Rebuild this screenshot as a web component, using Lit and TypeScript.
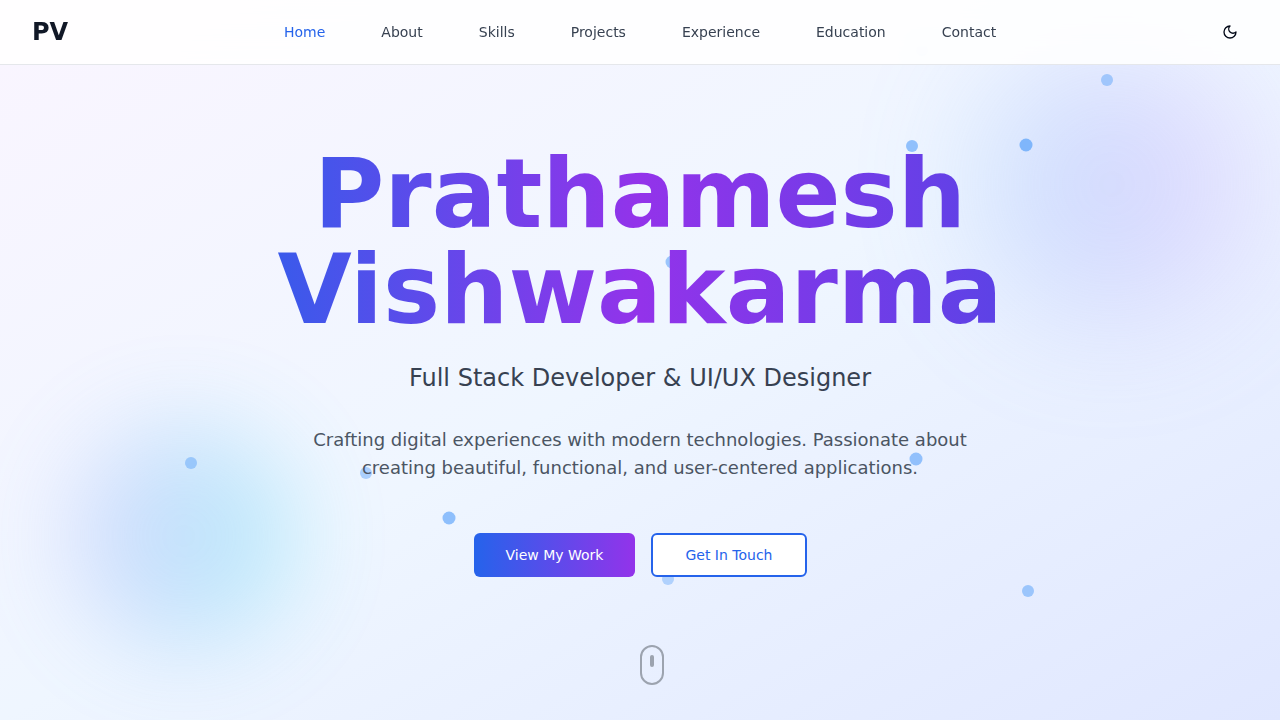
import { LitElement, css, html } from "lit";
import { customElement, state } from "lit/decorators.js";
import { classMap } from "lit/directives/class-map.js";
import { styleMap } from "lit/directives/style-map.js";

interface Particle {
  x: number;
  y: number;
  opacity: number;
  large?: boolean;
}

// Centres of the floating particles, in percent of the hero.
const PARTICLES: Particle[] = [
  { x: 86.48, y: 11.11, opacity: 0.5 },
  { x: 71.25, y: 20.28, opacity: 0.66 },
  { x: 80.16, y: 20.14, opacity: 0.75, large: true },
  { x: 52.5, y: 36.39, opacity: 0.6, large: true },
  { x: 14.92, y: 64.31, opacity: 0.5 },
  { x: 28.59, y: 65.69, opacity: 0.48 },
  { x: 71.6, y: 63.75, opacity: 0.64, large: true },
  { x: 35.04, y: 71.94, opacity: 0.68, large: true },
  { x: 52.19, y: 80.42, opacity: 0.42 },
  { x: 80.31, y: 82.08, opacity: 0.56 },
  { x: 72.03, y: 6.94, opacity: 0.4 },
];

const SECTIONS = ["Home", "About", "Skills", "Projects", "Experience", "Education", "Contact"];

@customElement("site-header")
class SiteHeader extends LitElement {
  @state() private active = "Home";

  static styles = css`
    :host {
      display: block;
    }
    .bar {
      display: flex;
      align-items: center;
      justify-content: space-between;
      height: 64px;
      padding: 0 32px;
      background: rgba(255, 255, 255, 0.88);
      backdrop-filter: blur(12px);
      border-bottom: 1px solid #e5e7eb;
    }
    .logo {
      color: #111827;
      font-size: 24px;
      line-height: 32px;
      font-weight: 700;
      text-decoration: none;
    }
    .links {
      display: flex;
      gap: 32px;
    }
    .link {
      padding: 8px 12px;
      color: #374151;
      font-size: 14px;
      line-height: 20px;
      text-decoration: none;
    }
    .link.active {
      color: #2563eb;
    }
    .theme {
      display: flex;
      align-items: center;
      justify-content: center;
      width: 36px;
      height: 36px;
      padding: 0;
      border: 0;
      border-radius: 6px;
      background: transparent;
      color: #020817;
      cursor: pointer;
    }
    .icon {
      width: 16px;
      height: 16px;
    }
  `;

  render() {
    return html`
      <header class="bar">
        <a class="logo" href="#home">PV</a>
        <nav class="links">
          ${SECTIONS.map(
            (name) => html`<a
              class=${classMap({ link: true, active: name === this.active })}
              href="#${name.toLowerCase()}"
              @click=${() => (this.active = name)}
              >${name}</a
            >`
          )}
        </nav>
        <button class="theme" type="button" aria-label="Toggle theme">
          <svg
            class="icon"
            viewBox="0 0 24 24"
            fill="none"
            stroke="currentColor"
            stroke-width="2"
            stroke-linecap="round"
            stroke-linejoin="round"
          >
            <path d="M12 3a6 6 0 0 0 9 9 9 9 0 1 1-9-9Z"></path>
          </svg>
        </button>
      </header>
    `;
  }
}

@customElement("hero-section")
class HeroSection extends LitElement {
  static styles = css`
    :host {
      display: block;
    }
    .hero {
      position: relative;
      display: flex;
      align-items: center;
      justify-content: center;
      box-sizing: border-box;
      min-height: 100vh;
      padding-top: 2px;
      overflow: hidden;
      background: linear-gradient(to bottom right, #faf5ff, #eff6ff, #e0e7ff);
    }
    .blob {
      position: absolute;
      border-radius: 50%;
    }
    .blob.violet {
      top: 48px;
      right: 32px;
      width: 272px;
      height: 272px;
      background: linear-gradient(to right, #60a5fa, #c084fc);
      opacity: 0.26;
      filter: blur(64px);
    }
    .blob.cyan {
      bottom: 72px;
      left: 72px;
      width: 224px;
      height: 224px;
      background: linear-gradient(to right, #818cf8, #22d3ee);
      opacity: 0.27;
      filter: blur(48px);
    }
    .particle {
      position: absolute;
      width: 12px;
      height: 12px;
      border-radius: 50%;
      background: #60a5fa;
      transform: translate(-50%, -50%);
    }
    .particle.large {
      width: 13px;
      height: 13px;
    }
    .content {
      position: relative;
      display: flex;
      flex-direction: column;
      align-items: center;
      width: 100%;
      max-width: 896px;
      text-align: center;
    }
    .name {
      width: 100%;
      margin: 0 0 24px;
      font-size: 96px;
      line-height: 96px;
      font-weight: 700;
      color: transparent;
      background: linear-gradient(to right, #2563eb, #9333ea, #4f46e5);
      background-clip: text;
      -webkit-background-clip: text;
    }
    .role {
      margin: 0 0 32px;
      color: #374151;
      font-size: 24px;
      line-height: 32px;
    }
    .intro {
      max-width: 672px;
      margin: 0 0 51px;
      color: #4b5563;
      font-size: 18px;
      line-height: 28px;
    }
    .actions {
      display: flex;
      gap: 16px;
    }
    .action {
      box-sizing: border-box;
      height: 44px;
      padding: 0 32px;
      border: 0;
      border-radius: 6px;
      font-family: inherit;
      font-size: 14px;
      line-height: 20px;
      cursor: pointer;
    }
    .action.primary {
      color: #ffffff;
      background: linear-gradient(to right, #2563eb, #9333ea);
    }
    .action.outline {
      color: #2563eb;
      background: #ffffff;
      border: 2px solid #2563eb;
    }
    .scroll {
      position: absolute;
      bottom: 35px;
      left: 50%;
      display: flex;
      justify-content: center;
      box-sizing: border-box;
      width: 24px;
      height: 40px;
      padding-top: 8px;
      border: 2px solid #9ca3af;
      border-radius: 12px;
    }
    .wheel {
      width: 4px;
      height: 12px;
      border-radius: 2px;
      background: #9ca3af;
    }
  `;

  render() {
    return html`
      <section class="hero" id="home">
        <div class="blob violet"></div>
        <div class="blob cyan"></div>
        ${PARTICLES.map(
          (p) => html`<div
            class=${classMap({ particle: true, large: !!p.large })}
            style=${styleMap({ left: `${p.x}%`, top: `${p.y}%`, opacity: `${p.opacity}` })}
          ></div>`
        )}
        <div class="content">
          <h1 class="name">Prathamesh Vishwakarma</h1>
          <p class="role">Full Stack Developer &amp; UI/UX Designer</p>
          <p class="intro">
            Crafting digital experiences with modern technologies. Passionate about creating
            beautiful, functional, and user-centered applications.
          </p>
          <div class="actions">
            <button class="action primary" type="button">View My Work</button>
            <button class="action outline" type="button">Get In Touch</button>
          </div>
        </div>
        <div class="scroll"><div class="wheel"></div></div>
      </section>
    `;
  }
}

@customElement("app-root")
class AppRoot extends LitElement {
  static styles = css`
    :host {
      display: block;
      font-family: "DejaVu Sans", sans-serif;
    }
    .top {
      position: fixed;
      top: 0;
      left: 0;
      right: 0;
      z-index: 10;
    }
  `;

  render() {
    return html`
      <site-header class="top"></site-header>
      <main>
        <hero-section></hero-section>
      </main>
    `;
  }
}
